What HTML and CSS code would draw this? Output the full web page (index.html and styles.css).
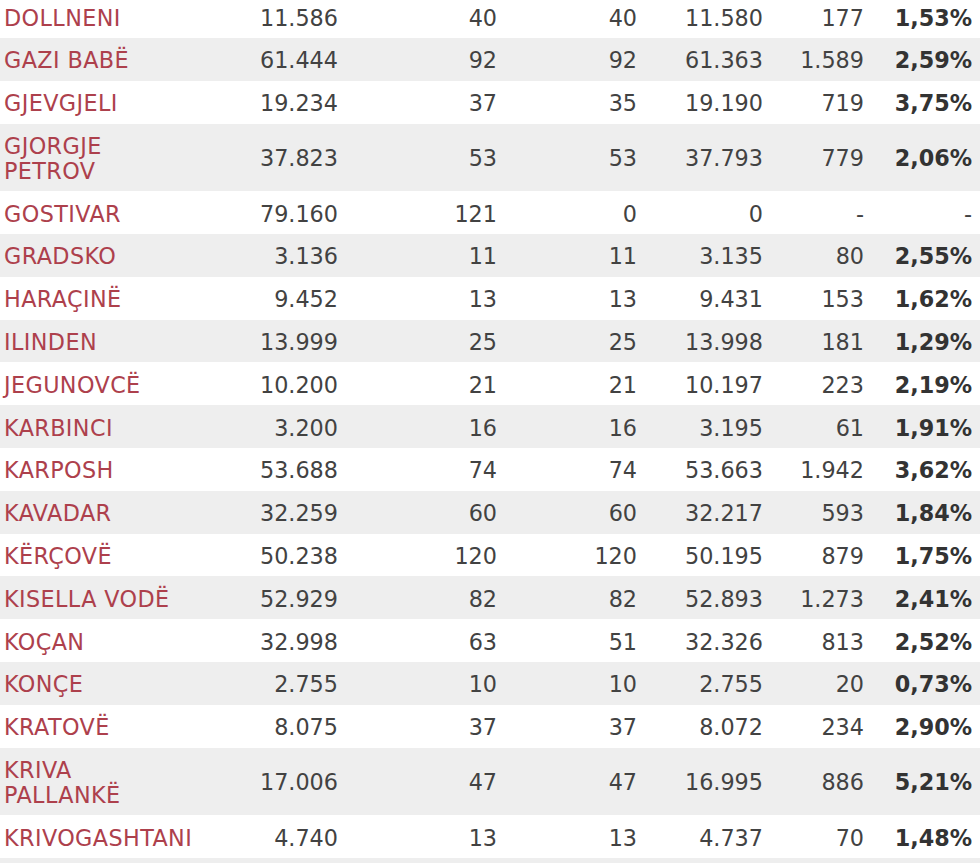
FILE: index.html
```html
<!DOCTYPE html>
<html lang="sq">
<head>
<meta charset="utf-8">
<title>Rezultatet</title>
<link rel="stylesheet" href="styles.css">
</head>
<body>
<table class="results">
  <colgroup>
    <col class="c-name"><col class="c-voters"><col class="c-st1"><col class="c-st2"><col class="c-votes"><col class="c-inv"><col class="c-pct">
  </colgroup>
  <tbody>
    <tr><td class="name"><a href="#">DOLLNENI</a></td><td>11.586</td><td>40</td><td>40</td><td>11.580</td><td>177</td><td class="pct">1,53%</td></tr>
    <tr><td class="name"><a href="#">GAZI BABË</a></td><td>61.444</td><td>92</td><td>92</td><td>61.363</td><td>1.589</td><td class="pct">2,59%</td></tr>
    <tr><td class="name"><a href="#">GJEVGJELI</a></td><td>19.234</td><td>37</td><td>35</td><td>19.190</td><td>719</td><td class="pct">3,75%</td></tr>
    <tr><td class="name"><a href="#">GJORGJE PETROV</a></td><td>37.823</td><td>53</td><td>53</td><td>37.793</td><td>779</td><td class="pct">2,06%</td></tr>
    <tr><td class="name"><a href="#">GOSTIVAR</a></td><td>79.160</td><td>121</td><td>0</td><td>0</td><td>-</td><td class="pct dash">-</td></tr>
    <tr><td class="name"><a href="#">GRADSKO</a></td><td>3.136</td><td>11</td><td>11</td><td>3.135</td><td>80</td><td class="pct">2,55%</td></tr>
    <tr><td class="name"><a href="#">HARAÇINË</a></td><td>9.452</td><td>13</td><td>13</td><td>9.431</td><td>153</td><td class="pct">1,62%</td></tr>
    <tr><td class="name"><a href="#">ILINDEN</a></td><td>13.999</td><td>25</td><td>25</td><td>13.998</td><td>181</td><td class="pct">1,29%</td></tr>
    <tr><td class="name"><a href="#">JEGUNOVCË</a></td><td>10.200</td><td>21</td><td>21</td><td>10.197</td><td>223</td><td class="pct">2,19%</td></tr>
    <tr><td class="name"><a href="#">KARBINCI</a></td><td>3.200</td><td>16</td><td>16</td><td>3.195</td><td>61</td><td class="pct">1,91%</td></tr>
    <tr><td class="name"><a href="#">KARPOSH</a></td><td>53.688</td><td>74</td><td>74</td><td>53.663</td><td>1.942</td><td class="pct">3,62%</td></tr>
    <tr><td class="name"><a href="#">KAVADAR</a></td><td>32.259</td><td>60</td><td>60</td><td>32.217</td><td>593</td><td class="pct">1,84%</td></tr>
    <tr><td class="name"><a href="#">KËRÇOVË</a></td><td>50.238</td><td>120</td><td>120</td><td>50.195</td><td>879</td><td class="pct">1,75%</td></tr>
    <tr><td class="name"><a href="#">KISELLA VODË</a></td><td>52.929</td><td>82</td><td>82</td><td>52.893</td><td>1.273</td><td class="pct">2,41%</td></tr>
    <tr><td class="name"><a href="#">KOÇAN</a></td><td>32.998</td><td>63</td><td>51</td><td>32.326</td><td>813</td><td class="pct">2,52%</td></tr>
    <tr><td class="name"><a href="#">KONÇE</a></td><td>2.755</td><td>10</td><td>10</td><td>2.755</td><td>20</td><td class="pct">0,73%</td></tr>
    <tr><td class="name"><a href="#">KRATOVË</a></td><td>8.075</td><td>37</td><td>37</td><td>8.072</td><td>234</td><td class="pct">2,90%</td></tr>
    <tr><td class="name"><a href="#">KRIVA PALLANKË</a></td><td>17.006</td><td>47</td><td>47</td><td>16.995</td><td>886</td><td class="pct">5,21%</td></tr>
    <tr><td class="name"><a href="#">KRIVOGASHTANI</a></td><td>4.740</td><td>13</td><td>13</td><td>4.737</td><td>70</td><td class="pct">1,48%</td></tr>
    <tr class="filler"><td class="name">&nbsp;</td><td></td><td></td><td></td><td></td><td></td><td class="pct"></td></tr>
  </tbody>
</table>
</body>
</html>
```

FILE: styles.css
```css
html, body {
  margin: 0;
  padding: 0;
  background: #ffffff;
}

body {
  font-family: "DejaVu Sans", Verdana, sans-serif;
  font-size: 22.3px;
  color: #444444;
  overflow: hidden;
}

.results {
  width: 980px;
  margin-top: -4.8px;
  border-collapse: collapse;
  table-layout: fixed;
}

.c-name { width: 201.5px; }
.c-voters { width: 142.5px; }
.c-st1 { width: 159px; }
.c-st2 { width: 140px; }
.c-votes { width: 126px; }
.c-inv { width: 101px; }
.c-pct { width: 110px; }

.results td {
  padding: 10.3px 6px 7.6px 0;
  line-height: 24.9px;
  text-align: right;
  vertical-align: middle;
  color: #424242;
}

.results tr:nth-child(even) td {
  background: #eeeeee;
}

.results td.name {
  text-align: left;
  padding-left: 4px;
  letter-spacing: 0.4px;
}

.results td.name a {
  color: #ad404c;
  text-decoration: none;
}

.results td.pct {
  padding-right: 8px;
  font-weight: bold;
  color: #333333;
}

.results td.pct.dash {
  font-weight: normal;
  color: #424242;
}
```
